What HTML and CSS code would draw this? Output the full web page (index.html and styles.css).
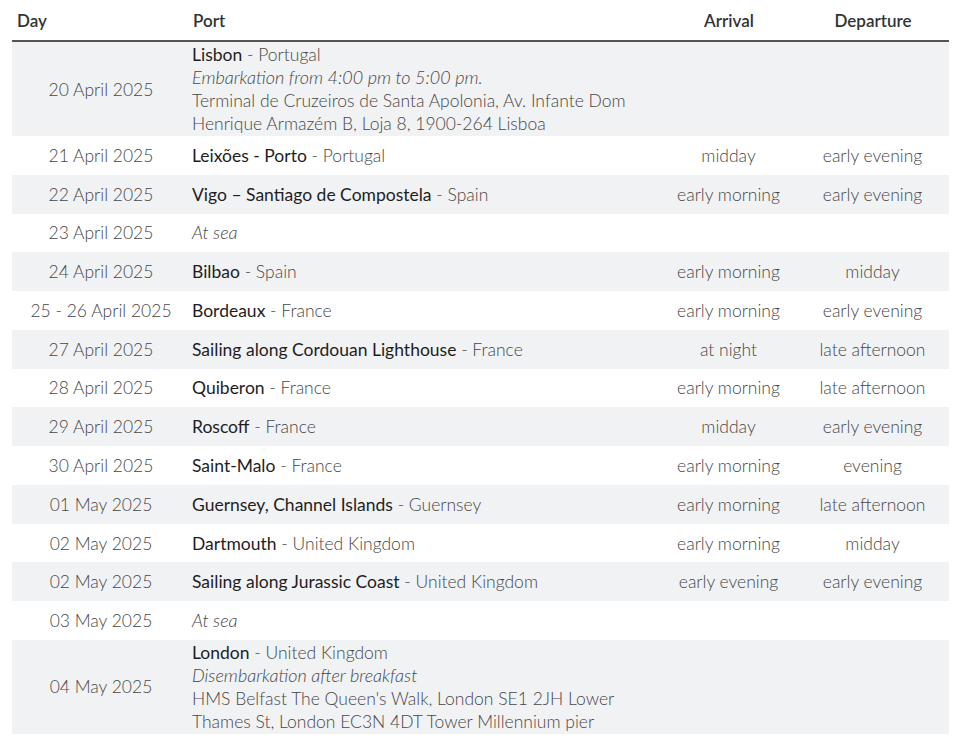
FILE: index.html
```html
<!DOCTYPE html>
<html lang="en">
<head>
<meta charset="utf-8">
<title>Itinerary</title>
<link rel="stylesheet" href="styles.css">
</head>
<body>
<table class="itinerary">
  <colgroup>
    <col class="c-day">
    <col class="c-port">
    <col class="c-arr">
    <col class="c-dep">
  </colgroup>
  <thead>
    <tr>
      <th class="h-day">Day</th>
      <th class="h-port">Port</th>
      <th class="h-time">Arrival</th>
      <th class="h-time">Departure</th>
    </tr>
  </thead>
  <tbody>
    <tr class="multi">
      <td class="day">20 April 2025</td>
      <td class="port"><span class="name">Lisbon</span> - Portugal<br><em>Embarkation from 4:00 pm to 5:00 pm.</em><br>Terminal de Cruzeiros de Santa Apolonia, Av. Infante Dom<br>Henrique Armazém B, Loja 8, 1900-264 Lisboa</td>
      <td class="time"></td>
      <td class="time"></td>
    </tr>
    <tr>
      <td class="day">21 April 2025</td>
      <td class="port"><span class="name">Leixões - Porto</span> - Portugal</td>
      <td class="time">midday</td>
      <td class="time">early evening</td>
    </tr>
    <tr>
      <td class="day">22 April 2025</td>
      <td class="port"><span class="name">Vigo – Santiago de Compostela</span> - Spain</td>
      <td class="time">early morning</td>
      <td class="time">early evening</td>
    </tr>
    <tr>
      <td class="day">23 April 2025</td>
      <td class="port"><em>At sea</em></td>
      <td class="time"></td>
      <td class="time"></td>
    </tr>
    <tr>
      <td class="day">24 April 2025</td>
      <td class="port"><span class="name">Bilbao</span> - Spain</td>
      <td class="time">early morning</td>
      <td class="time">midday</td>
    </tr>
    <tr>
      <td class="day">25 - 26 April 2025</td>
      <td class="port"><span class="name">Bordeaux</span> - France</td>
      <td class="time">early morning</td>
      <td class="time">early evening</td>
    </tr>
    <tr>
      <td class="day">27 April 2025</td>
      <td class="port"><span class="name">Sailing along Cordouan Lighthouse</span> - France</td>
      <td class="time">at night</td>
      <td class="time">late afternoon</td>
    </tr>
    <tr>
      <td class="day">28 April 2025</td>
      <td class="port"><span class="name">Quiberon</span> - France</td>
      <td class="time">early morning</td>
      <td class="time">late afternoon</td>
    </tr>
    <tr>
      <td class="day">29 April 2025</td>
      <td class="port"><span class="name">Roscoff</span> - France</td>
      <td class="time">midday</td>
      <td class="time">early evening</td>
    </tr>
    <tr>
      <td class="day">30 April 2025</td>
      <td class="port"><span class="name">Saint-Malo</span> - France</td>
      <td class="time">early morning</td>
      <td class="time">evening</td>
    </tr>
    <tr>
      <td class="day">01 May 2025</td>
      <td class="port"><span class="name">Guernsey, Channel Islands</span> - Guernsey</td>
      <td class="time">early morning</td>
      <td class="time">late afternoon</td>
    </tr>
    <tr>
      <td class="day">02 May 2025</td>
      <td class="port"><span class="name">Dartmouth</span> - United Kingdom</td>
      <td class="time">early morning</td>
      <td class="time">midday</td>
    </tr>
    <tr>
      <td class="day">02 May 2025</td>
      <td class="port"><span class="name">Sailing along Jurassic Coast</span> - United Kingdom</td>
      <td class="time">early evening</td>
      <td class="time">early evening</td>
    </tr>
    <tr>
      <td class="day">03 May 2025</td>
      <td class="port"><em>At sea</em></td>
      <td class="time"></td>
      <td class="time"></td>
    </tr>
    <tr class="multi">
      <td class="day">04 May 2025</td>
      <td class="port"><span class="name">London</span> - United Kingdom<br><em>Disembarkation after breakfast</em><br>HMS Belfast The Queen's Walk, London SE1 2JH Lower<br>Thames St, London EC3N 4DT Tower Millennium pier</td>
      <td class="time"></td>
      <td class="time"></td>
    </tr>
  </tbody>
</table>
</body>
</html>
```

FILE: styles.css
```css
html, body {
  margin: 0;
  padding: 0;
  background: #ffffff;
}

body {
  font-family: "Lato", "Open Sans", "Liberation Sans", sans-serif;
  color: #474747;
}

.itinerary {
  margin-left: 12px;
  width: 937px;
  border-collapse: collapse;
  table-layout: fixed;
  font-size: 17.5px;
  font-weight: 300;
}

.c-day { width: 176px; }
.c-port { width: 473px; }
.c-arr { width: 136px; }
.c-dep { width: 152px; }

.itinerary th {
  height: 40px;
  padding: 0 5px;
  font-size: 17px;
  font-weight: 600;
  color: #333333;
  vertical-align: middle;
  border-bottom: 2px solid #555555;
}

.h-day, .h-port { text-align: left; }
.h-time { text-align: center; }

.itinerary td {
  height: 38.77px;
  box-sizing: border-box;
  padding: 0 5px 0 4px;
  line-height: 23px;
  vertical-align: middle;
}

.itinerary td.day {
  padding: 0 4px 0 6px;
}

.itinerary tr.multi td {
  padding-top: 1px;
  padding-bottom: 1px;
}

.itinerary tbody tr:nth-child(odd) {
  background: #f1f2f4;
}

.day { text-align: center; }
.time { text-align: center; }
.port { text-align: left; }

.name {
  font-weight: 400;
  color: #1e1e1e;
}

.itinerary em {
  font-style: italic;
  font-weight: 300;
  font-size: 18px;
}
```
